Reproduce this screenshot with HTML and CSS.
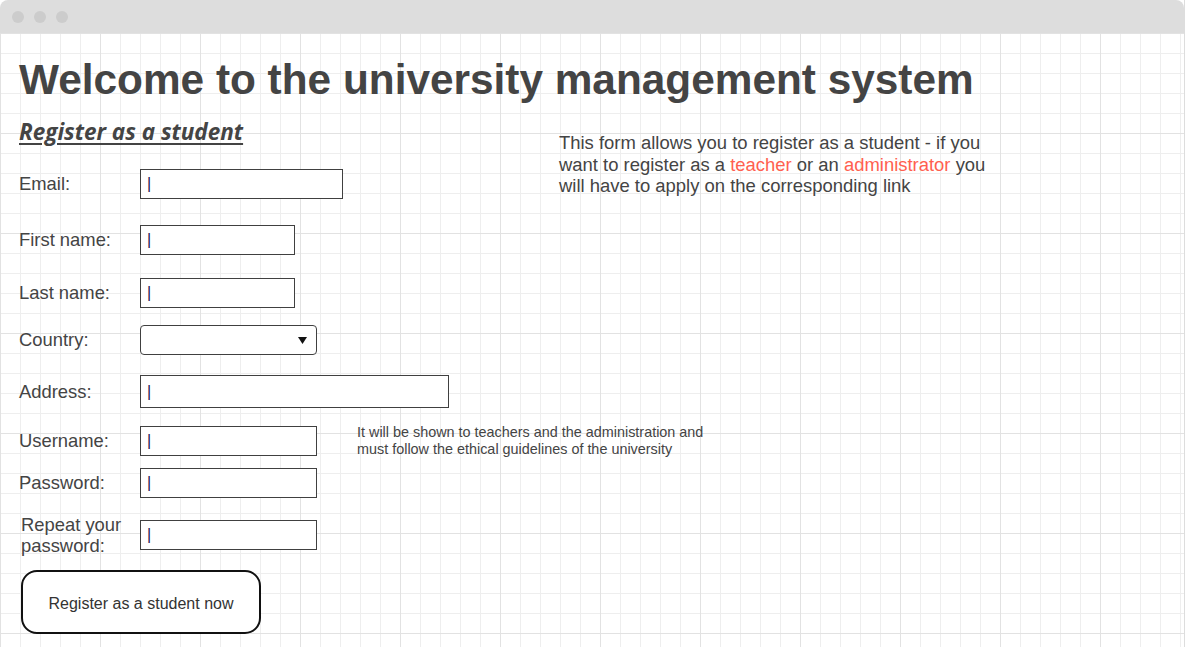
FILE: index.html
```html
<!DOCTYPE html>
<html lang="en">
<head>
<meta charset="utf-8">
<title>University management system</title>
<link rel="stylesheet" href="styles.css">
</head>
<body>
<div class="window">
  <div class="chrome">
    <span class="dot"></span><span class="dot"></span><span class="dot"></span>
  </div>
  <main class="page">
    <h1 class="title">Welcome to the university management system</h1>
    <div class="columns">
      <section class="form-col">
        <h2 class="subtitle">Register as a student</h2>
        <form class="form">
          <div class="row row-email">
            <label class="label">Email:</label>
            <input class="field field-email" type="text" placeholder="|">
          </div>
          <div class="row row-first">
            <label class="label">First name:</label>
            <input class="field field-short" type="text" placeholder="|">
          </div>
          <div class="row row-last">
            <label class="label">Last name:</label>
            <input class="field field-short" type="text" placeholder="|">
          </div>
          <div class="row row-country">
            <label class="label">Country:</label>
            <span class="select-wrap">
              <select class="select"><option></option></select>
              <svg class="select-arrow" width="9" height="7" viewBox="0 0 9 7"><path d="M0 0 H9 L4.5 7 Z" fill="#111"/></svg>
            </span>
          </div>
          <div class="row row-address">
            <label class="label">Address:</label>
            <input class="field field-address" type="text" placeholder="|">
          </div>
          <div class="row row-username">
            <label class="label">Username:</label>
            <input class="field field-mid" type="text" placeholder="|">
            <p class="hint">It will be shown to teachers and the administration and must follow the ethical guidelines of the university</p>
          </div>
          <div class="row row-password">
            <label class="label">Password:</label>
            <input class="field field-mid" type="password" placeholder="|">
          </div>
          <div class="row row-repeat">
            <label class="label label-repeat">Repeat your password:</label>
            <input class="field field-mid" type="password" placeholder="|">
          </div>
          <button class="submit" type="button">Register as a student now</button>
        </form>
      </section>
      <aside class="info-col">
        <p class="info">This form allows you to register as a student - if you want to register as a <a class="link" href="#">teacher</a> or an <a class="link" href="#">administrator</a> you will have to apply on the corresponding link</p>
      </aside>
    </div>
  </main>
</div>
</body>
</html>
```
FILE: styles.css
```css
* { box-sizing: border-box; }

html, body {
  margin: 0;
  padding: 0;
  background: #ffffff;
}

body {
  font-family: "Liberation Sans", Arial, sans-serif;
  color: #444444;
}

.window {
  width: 1185px;
  height: 647px;
  overflow: hidden;
  display: flex;
  flex-direction: column;
  border-right: 1px solid #dddddd;
}

.chrome {
  height: 33px;
  flex: none;
  background: #dddddd;
  border-radius: 8px 8px 0 0;
  display: flex;
  align-items: center;
  gap: 10px;
  padding-left: 12px;
}

.dot {
  width: 12px;
  height: 12px;
  border-radius: 50%;
  background: #cccccc;
}

.page {
  flex: 1;
  padding: 0 19px;
  background-color: #ffffff;
  background-image:
    linear-gradient(to bottom, #e2e2e2 1px, transparent 1px),
    linear-gradient(to right, #e2e2e2 1px, transparent 1px),
    linear-gradient(to bottom, #eeeeee 1px, transparent 1px),
    linear-gradient(to right, #eeeeee 1px, transparent 1px);
  background-size: 100px 100px, 100px 100px, 20px 20px, 20px 20px;
  background-position: 0 0;
}

.title {
  margin: 23px 0 0;
  font-size: 42.35px;
  font-weight: 700;
  line-height: 48px;
  color: #444444;
  white-space: nowrap;
}

.columns {
  display: flex;
}

.form-col {
  width: 540px;
  flex: none;
}

.subtitle {
  margin: 13px 0 0;
  font-family: "Open Sans", sans-serif;
  font-size: 22.5px;
  font-weight: 700;
  font-style: italic;
  line-height: 30px;
  text-decoration: underline;
  text-decoration-thickness: 2px;
  text-underline-offset: 3px;
  color: #444444;
}

.form {
  display: flex;
  flex-direction: column;
  align-items: flex-start;
}

.row {
  display: flex;
  align-items: center;
}

.row-email { margin-top: 22px; }
.row-first { margin-top: 26px; }
.row-last { margin-top: 23px; }
.row-country { margin-top: 17px; }
.row-address { margin-top: 20px; }
.row-username { margin-top: 16px; }
.row-password { margin-top: 10px; }
.row-repeat { margin-top: 16px; }

.label {
  width: 121px;
  flex: none;
  font-size: 18.4px;
  line-height: 21px;
  color: #444444;
  padding-bottom: 1px;
}

.label-repeat {
  padding-left: 2px;
  padding-bottom: 0;
}

.field {
  height: 30px;
  border: 1px solid #404040;
  border-radius: 0;
  background: #ffffff;
  padding: 0 6px;
  font-family: "Liberation Sans", Arial, sans-serif;
  font-size: 16px;
  color: #222222;
  outline: none;
}

.field::placeholder {
  color: #1c1650;
  opacity: 1;
}

.field-email { width: 203px; }
.field-short { width: 155px; }
.field-mid { width: 177px; }
.field-address { width: 309px; height: 33px; }

.select-wrap {
  position: relative;
  display: inline-block;
}

.select {
  display: block;
  width: 177px;
  height: 30px;
  border: 1px solid #404040;
  border-radius: 4px;
  background: #ffffff;
  appearance: none;
  -webkit-appearance: none;
  font-family: "Liberation Sans", Arial, sans-serif;
  font-size: 16px;
}

.select-arrow {
  position: absolute;
  left: 158px;
  top: 12px;
}

.hint {
  margin: 0 0 0 40px;
  width: 370px;
  font-size: 14.4px;
  line-height: 17px;
  color: #444444;
}

.submit {
  margin: 14px 0 0 2px;
  padding: 4px 0 0;
  width: 240px;
  height: 64px;
  border: 2px solid #111111;
  border-radius: 16px;
  background: #ffffff;
  font-family: "Liberation Sans", Arial, sans-serif;
  font-size: 16px;
  color: #333333;
  cursor: pointer;
}

.info-col {
  flex: none;
  width: 440px;
}

.info {
  margin: 28px 0 0;
  font-size: 18.45px;
  line-height: 21.5px;
  color: #444444;
}

.link {
  color: #ff5f4f;
  text-decoration: none;
}
```
